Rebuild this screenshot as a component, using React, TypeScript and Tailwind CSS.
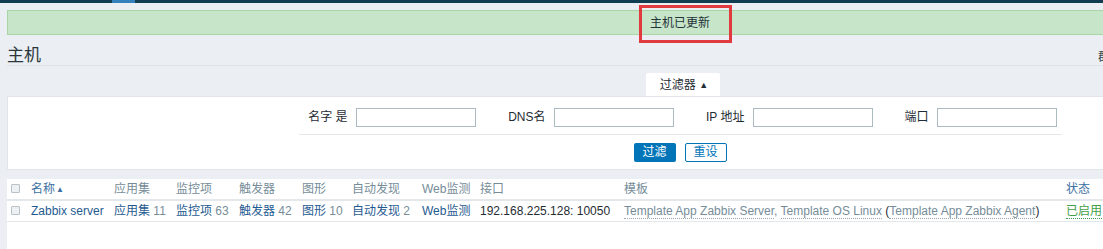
const FONT = "font-['Liberation_Sans','Noto_Sans_CJK_SC',sans-serif]";

const LINK = "text-[#1f5b91]";
const HEAD_LINK = "text-[#3d70a3]";
const GRAY = "text-[#768d99]";

function Field({ label, labelW }: { label: string; labelW: string }) {
  return (
    <>
      <div className={`${labelW} text-right pr-[8px] leading-[19px] text-[#1f2c33]`}>{label}</div>
      <div className="w-[120px] h-[19px] border border-[#acbbc2] bg-white" />
    </>
  );
}

function Checkbox() {
  return <span className="inline-block w-[9px] h-[9px] border border-[#b9c2c7] bg-[#eef1f3] rounded-[1px]" />;
}

const cols = [
  "w-[24px] pl-[4px]",
  "w-[83px]",
  "w-[62px]",
  "w-[63px]",
  "w-[63px]",
  "w-[50px]",
  "w-[70px]",
  "w-[58px]",
  "w-[144px]",
  "w-[442px]",
  "w-[60px]",
];

function TplLink({ children }: { children: string }) {
  return <span className={`${GRAY} border-b border-dotted border-[#9aa9b1]`}>{children}</span>;
}

export default function App() {
  return (
    <div className={`relative w-[1103px] h-[249px] overflow-hidden bg-[#ebeef2] text-[12px] ${FONT}`}>
      {/* top nav bar remnant */}
      <div className="h-[3px] bg-[#123c4f] flex">
        <div className="ml-[112px] w-[23px] h-[3px] bg-[#3581bd]" />
      </div>

      <div className="ml-[7px] w-[1346px]">
        {/* message */}
        <div className="mt-[7px] h-[25px] border border-[#a9d4a3] bg-[#c7e5c8] flex items-center justify-center text-[#24323a]">
          主机已更新
        </div>

        {/* title */}
        <div className="relative h-[31px] border-b border-[#dfe3e7] pt-[11px]">
          <h1 className="text-[17px] leading-[20px] font-normal text-[#2a363c]">主机</h1>
          <span className="absolute left-[1091px] top-[13px] text-[#3a4a52]">群组</span>
        </div>

        {/* filter tab */}
        <div className="mt-[7px] flex justify-center">
          <div className="h-[23px] pl-[14px] pr-[12px] ml-[6px] bg-white rounded-t-[2px] leading-[24px] text-[#1f2c33]">
            过滤器 <span className="text-[9px] align-[1px]">▲</span>
          </div>
        </div>

        {/* filter panel */}
        <div className="h-[74px] bg-white border border-[#e2e6ea] pt-[11px]">
          <div className="flex justify-center">
            <div className="w-[763px] border-b border-[#e4e8eb] pb-[7px] flex pl-[1px]">
              <Field label="名字 是" labelW="w-[56px]" />
              <Field label="DNS名" labelW="w-[78px]" />
              <Field label="IP 地址" labelW="w-[79px]" />
              <Field label="端口" labelW="w-[64px]" />
            </div>
          </div>
          <div className="mt-[8px] flex justify-center gap-[9px]">
            <button className="h-[19px] w-[42px] bg-[#0275b8] text-white rounded-[2px] leading-[19px] text-[12px]">过滤</button>
            <button className="h-[19px] w-[42px] bg-white border border-[#0275b8] text-[#0275b8] rounded-[2px] leading-[17px] text-[12px]">重设</button>
          </div>
        </div>

        {/* table */}
        <div className="mt-[9px] bg-white h-[80px]">
          <div className="h-[22px] border-b-2 border-[#e4e8eb] flex items-center">
            <div className={cols[0]}><Checkbox /></div>
            <div className={`${cols[1]} ${HEAD_LINK}`}>名称<span className="text-[8px] ml-[1px] align-[1px]">▲</span></div>
            <div className={`${cols[2]} ${GRAY}`}>应用集</div>
            <div className={`${cols[3]} ${GRAY}`}>监控项</div>
            <div className={`${cols[4]} ${GRAY}`}>触发器</div>
            <div className={`${cols[5]} ${GRAY}`}>图形</div>
            <div className={`${cols[6]} ${GRAY}`}>自动发现</div>
            <div className={`${cols[7]} ${GRAY}`}>Web监测</div>
            <div className={`${cols[8]} ${GRAY}`}>接口</div>
            <div className={`${cols[9]} ${GRAY}`}>模板</div>
            <div className={`${cols[10]} ${HEAD_LINK}`}>状态</div>
          </div>
          <div className="h-[21px] border-b border-[#e4e8eb] flex items-center whitespace-nowrap">
            <div className={cols[0]}><Checkbox /></div>
            <div className={`${cols[1]} ${LINK}`}>Zabbix server</div>
            <div className={cols[2]}><span className={LINK}>应用集</span> <span className={GRAY}>11</span></div>
            <div className={cols[3]}><span className={LINK}>监控项</span> <span className={GRAY}>63</span></div>
            <div className={cols[4]}><span className={LINK}>触发器</span> <span className={GRAY}>42</span></div>
            <div className={cols[5]}><span className={LINK}>图形</span> <span className={GRAY}>10</span></div>
            <div className={cols[6]}><span className={LINK}>自动发现</span> <span className={GRAY}>2</span></div>
            <div className={`${cols[7]} ${LINK}`}>Web监测</div>
            <div className={`${cols[8]} text-[#1f2c33]`}>192.168.225.128: 10050</div>
            <div className={`${cols[9]} text-[#1f2c33]`}>
              <TplLink>Template App Zabbix Server</TplLink>
              <span className={GRAY}>, </span>
              <TplLink>Template OS Linux</TplLink> (<TplLink>Template App Zabbix Agent</TplLink>)
            </div>
            <div className={cols[10]}>
              <span className="text-[#429e47] border-b border-dotted border-[#429e47]">已启用</span>
            </div>
          </div>
        </div>
      </div>

      {/* annotation box */}
      <div className="absolute left-[639px] top-[5px] w-[93px] h-[38px] border-[3px] border-[#e0393e]" />
    </div>
  );
}
